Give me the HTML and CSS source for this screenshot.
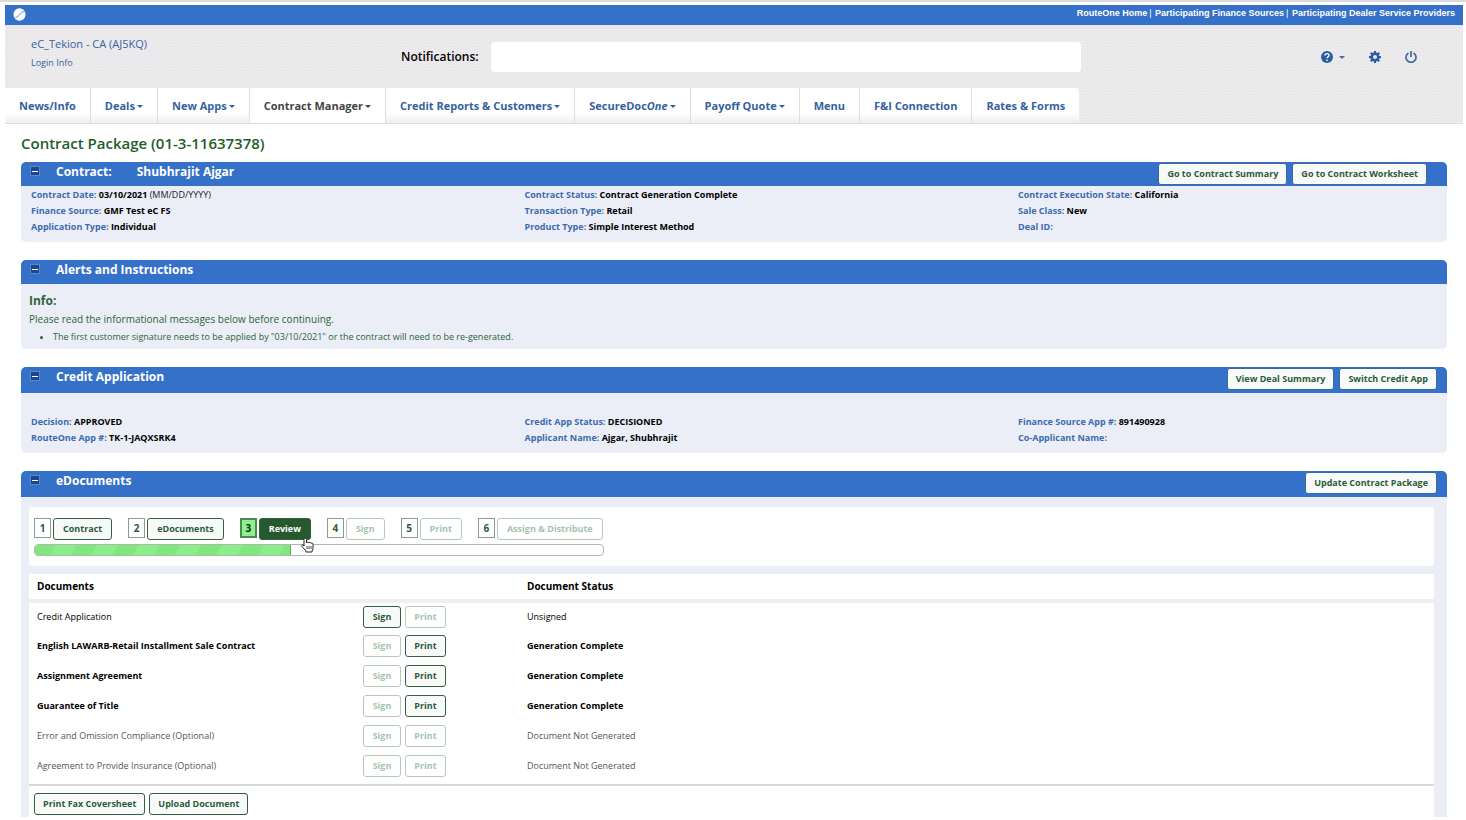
FILE: index.html
```html
<!DOCTYPE html>
<html lang="en">
<head>
    <meta charset="utf-8">
    <meta name="viewport" content="width=device-width, initial-scale=1">

    <title>Contract Package</title>

    <link rel="stylesheet" href="styles.css">
</head>
<body>
    <div class="page">
        <header>
            <div class="topbar">
                <svg class="logo" viewBox="0 0 26 26" aria-hidden="true">
                    <ellipse cx="13" cy="13" rx="12" ry="12.5" fill="#fff"/>
                    <path d="M3 19C9 18 12 15 14 12S19 7 23 7" fill="none" stroke="#7fa5de" stroke-width="2"/>
                    <path d="M8 23C9 17 14 13 22 9" fill="none" stroke="#a9c4ea" stroke-width="1"/>
                </svg>
                <nav class="toplinks">
                    <a href="#">RouteOne Home</a><span class="divider">|</span>
                    <a href="#">Participating Finance Sources</a><span class="divider">|</span>
                    <a href="#">Participating Dealer Service Providers</a>
                </nav>
            </div>

            <div class="masthead">
                <div class="account-row">
                    <div class="account">
                        <a class="account-name" href="#">eC_Tekion - CA (AJ5KQ)</a>
                        <a class="login-info" href="#">Login Info</a>
                    </div>
                    <div class="notifications">
                        <label for="notifications">Notifications:</label>
                        <input id="notifications" type="text">
                    </div>
                    <div class="tools">
                        <button class="tool help" type="button" aria-label="Help">
                            <svg width="12" height="12" viewBox="0 0 24 24"><circle cx="12" cy="12" r="12" fill="#2a5ba3"/><path d="M8 9c0-5 8-5 8 0 0 3-4 2.500-4 5.500M12 17v3" fill="none" stroke="#fff" stroke-width="2.800"/></svg>
                            <span class="caret"></span>
                        </button>
                        <button class="tool" type="button" aria-label="Settings">
                            <svg width="12" height="12" viewBox="0 0 24 24"><circle cx="12" cy="12" r="6.500" fill="none" stroke="#2a5ba3" stroke-width="5"/><path d="M12 0v5M12 19v5M0 12h5M19 12h5M3.500 3.500l3.500 3.500M17 17l3.500 3.500M3.500 20.500L7 17M17 7l3.500-3.500" stroke="#2a5ba3" stroke-width="4.500"/></svg>
                        </button>
                        <button class="tool" type="button" aria-label="Log out">
                            <svg width="12" height="12" viewBox="0 0 24 24"><path d="M7 4a10 10 0 1 0 10 0M12 0v12" fill="none" stroke="#466ba3" stroke-width="3.500"/></svg>
                        </button>
                    </div>
                </div>

                <nav class="tabs">
                    <a class="tab" href="#">News/Info</a>
                    <a class="tab" href="#">Deals<span class="caret"></span></a>
                    <a class="tab" href="#">New Apps<span class="caret"></span></a>
                    <a class="tab active" href="#">Contract Manager<span class="caret"></span></a>
                    <a class="tab" href="#">Credit Reports &amp; Customers<span class="caret"></span></a>
                    <a class="tab" href="#">SecureDoc<i>One</i><span class="caret"></span></a>
                    <a class="tab" href="#">Payoff Quote<span class="caret"></span></a>
                    <a class="tab" href="#">Menu</a>
                    <a class="tab" href="#">F&amp;I Connection</a>
                    <a class="tab" href="#">Rates &amp; Forms</a>
                </nav>
            </div>
        </header>

        <main>
            <h1>Contract Package (01-3-11637378)</h1>

            <section class="panel">
                <div class="panel-head short">
                    <button class="collapse" type="button" aria-label="Collapse"></button>
                    <h2>Contract:<span class="customer">Shubhrajit Ajgar</span></h2>
                    <div class="panel-actions wide">
                        <button class="btn" type="button">Go to Contract Summary</button>
                        <button class="btn" type="button">Go to Contract Worksheet</button>
                    </div>
                </div>
                <div class="facts">
                    <div>
                        <p>Contract Date: <b>03/10/2021</b> <span class="hint">(MM/DD/YYYY)</span></p>
                        <p>Finance Source: <b>GMF Test eC FS</b></p>
                        <p>Application Type: <b>Individual</b></p>
                    </div>
                    <div>
                        <p>Contract Status: <b>Contract Generation Complete</b></p>
                        <p>Transaction Type: <b>Retail</b></p>
                        <p>Product Type: <b>Simple Interest Method</b></p>
                    </div>
                    <div>
                        <p>Contract Execution State: <b>California</b></p>
                        <p>Sale Class: <b>New</b></p>
                        <p>Deal ID:</p>
                    </div>
                </div>
            </section>

            <section class="panel">
                <div class="panel-head short">
                    <button class="collapse" type="button" aria-label="Collapse"></button>
                    <h2>Alerts and Instructions</h2>
                </div>
                <div class="alerts">
                    <h3>Info:</h3>
                    <p>Please read the informational messages below before continuing.</p>
                    <ul>
                        <li>The first customer signature needs to be applied by "03/10/2021" or the contract will need to be re-generated.</li>
                    </ul>
                </div>
            </section>

            <section class="panel">
                <div class="panel-head">
                    <button class="collapse" type="button" aria-label="Collapse"></button>
                    <h2>Credit Application</h2>
                    <div class="panel-actions">
                        <button class="btn" type="button">View Deal Summary</button>
                        <button class="btn" type="button">Switch Credit App</button>
                    </div>
                </div>
                <div class="facts credit">
                    <div>
                        <p>Decision: <b>APPROVED</b></p>
                        <p>RouteOne App #: <b>TK-1-JAQXSRK4</b></p>
                    </div>
                    <div>
                        <p>Credit App Status: <b>DECISIONED</b></p>
                        <p>Applicant Name: <b>Ajgar, Shubhrajit</b></p>
                    </div>
                    <div>
                        <p>Finance Source App #: <b>891490928</b></p>
                        <p>Co-Applicant Name:</p>
                    </div>
                </div>
            </section>

            <section class="panel documents">
                <div class="panel-head">
                    <button class="collapse" type="button" aria-label="Collapse"></button>
                    <h2>eDocuments</h2>
                    <div class="panel-actions">
                        <button class="btn" type="button">Update Contract Package</button>
                    </div>
                </div>
                <div class="documents-body">
                    <div class="progress-box">
                        <ol class="steps">
                            <li><span class="num">1</span><button class="btn" type="button">Contract</button></li>
                            <li><span class="num">2</span><button class="btn" type="button">eDocuments</button></li>
                            <li class="current"><span class="num">3</span><button class="btn" type="button">Review</button>
                                <svg class="pointer" width="13" height="16" viewBox="0 0 13 16" aria-hidden="true"><path d="M3 9V2.500q0-1.500 1.200-1.500t1.300 1.500V6q.2-1 1.100-1t1.200 1q.2-.6 1-.6t1.200 1q.2-.4.9-.4 1.100 0 1.100 1.500V11q0 2-1 3v1H5v-1L1 9.500Q.5 8 1.500 7.800T3 9z" fill="#fff" stroke="#222" stroke-width="1"/><path d="M6 9v3M8 9v3M10 9v3" stroke="#222" stroke-width=".8"/></svg>
                            </li>
                            <li><span class="num">4</span><button class="btn" type="button" disabled>Sign</button></li>
                            <li><span class="num">5</span><button class="btn" type="button" disabled>Print</button></li>
                            <li><span class="num">6</span><button class="btn" type="button" disabled>Assign &amp; Distribute</button></li>
                        </ol>
                        <div class="progress"><div class="progress-fill" style="width: 45%"></div></div>
                    </div>

                    <div class="table-box">
                        <table>
                            <colgroup><col class="col-name"><col class="col-actions"><col></colgroup>
                            <thead>
                                <tr><th scope="col">Documents</th><th></th><th scope="col">Document Status</th></tr>
                            </thead>
                            <tbody>
                                <tr>
                                    <td>Credit Application</td>
                                    <td><div class="row-actions"><button class="btn" type="button">Sign</button><button class="btn" type="button" disabled>Print</button></div></td>
                                    <td>Unsigned</td>
                                </tr>
                                <tr class="generated">
                                    <td>English LAWARB-Retail Installment Sale Contract</td>
                                    <td><div class="row-actions"><button class="btn" type="button" disabled>Sign</button><button class="btn" type="button">Print</button></div></td>
                                    <td>Generation Complete</td>
                                </tr>
                                <tr class="generated">
                                    <td>Assignment Agreement</td>
                                    <td><div class="row-actions"><button class="btn" type="button" disabled>Sign</button><button class="btn" type="button">Print</button></div></td>
                                    <td>Generation Complete</td>
                                </tr>
                                <tr class="generated">
                                    <td>Guarantee of Title</td>
                                    <td><div class="row-actions"><button class="btn" type="button" disabled>Sign</button><button class="btn" type="button">Print</button></div></td>
                                    <td>Generation Complete</td>
                                </tr>
                                <tr class="optional">
                                    <td>Error and Omission Compliance (Optional)</td>
                                    <td><div class="row-actions"><button class="btn" type="button" disabled>Sign</button><button class="btn" type="button" disabled>Print</button></div></td>
                                    <td>Document Not Generated</td>
                                </tr>
                                <tr class="optional">
                                    <td>Agreement to Provide Insurance (Optional)</td>
                                    <td><div class="row-actions"><button class="btn" type="button" disabled>Sign</button><button class="btn" type="button" disabled>Print</button></div></td>
                                    <td>Document Not Generated</td>
                                </tr>
                            </tbody>
                        </table>
                        <div class="table-footer">
                            <button class="btn" type="button">Print Fax Coversheet</button>
                            <button class="btn" type="button">Upload Document</button>
                        </div>
                    </div>
                </div>
            </section>
        </main>
    </div>
</body>
</html>
```

FILE: styles.css
```css
* {
    box-sizing: border-box;
}

body {
    margin: 0;
    background: #ffffff;
    border-top: 2px solid #dcdcdc;
    font-family: "Open Sans", sans-serif;
    font-size: 9px;
    line-height: 16px;
    color: #000000;
}

h1, h2, h3, p, ul, ol {
    margin: 0;
    padding: 0;
}

a {
    color: #35619f;
    text-decoration: none;
}

button {
    font-family: inherit;
    cursor: pointer;
}

.page {
    padding: 3px 3px 0 5px;
}

/* header */

.topbar {
    display: flex;
    justify-content: space-between;
    height: 20px;
    padding: 0 8px;
    background: #3671c9;
}

.logo {
    width: 13px;
    height: 13px;
    margin-top: 3px;
}

.toplinks {
    font-family: "Liberation Sans", Arial, sans-serif;
    font-weight: bold;
    color: #ffffff;
}

.toplinks a {
    color: #ffffff;
}

.divider {
    margin: 0 1px 0 2px;
    font-weight: normal;
}

.masthead {
    background-color: #e9e7e9;
    background-image:
        repeating-linear-gradient(90deg, rgba(255, 255, 255, 0.15) 0 1px, transparent 1px 3px),
        repeating-linear-gradient(rgba(255, 255, 255, 0.15) 0 1px, transparent 1px 3px);
    border-top: 1px solid #dbe6f2;
    border-bottom: 1px solid #dddddd;
}

.account-row {
    display: flex;
    height: 62px;
    padding: 0 46px 0 26px;
}

.account {
    flex: 0 0 370px;
    padding-top: 10px;
}

.account a {
    display: block;
}

.account-name {
    font-size: 11px;
    line-height: 16px;
}

.login-info {
    line-height: 22px;
}

.notifications {
    display: flex;
    flex: 0 1 680px;
    align-items: center;
    gap: 12px;
}

.notifications label {
    font-size: 12px;
    font-weight: 600;
}

.notifications input {
    flex: 1;
    min-width: 0;
    height: 30px;
    border: 0;
    border-radius: 4px;
    background: #ffffff;
}

.tools {
    display: flex;
    align-items: center;
    gap: 24px;
    margin-left: auto;
}

.tool {
    display: flex;
    align-items: center;
    gap: 4px;
    padding: 0;
    border: 0;
    background: none;
    color: #466ba3;
}

.caret {
    display: inline-block;
    margin-left: 2px;
    border-top: 3px solid currentColor;
    border-left: 3px solid transparent;
    border-right: 3px solid transparent;
    vertical-align: 2px;
}

.tabs {
    display: flex;
}

.tab {
    height: 35px;
    padding: 0 14px;
    background: linear-gradient(#ffffff 70%, #efefef);
    border-right: 1px solid #dedde1;
    font-size: 11px;
    font-weight: bold;
    line-height: 36px;
    white-space: nowrap;
}

.tab:last-child {
    border-right: 0;
    border-top-right-radius: 3px;
}

.tab.active {
    background: #ffffff;
    color: #444444;
}

/* panels */

main {
    padding: 7px 16px 0;
}

h1 {
    font-size: 15px;
    font-weight: 600;
    line-height: 24px;
    color: #235c2b;
}

.panel {
    margin: 7px 0 18px;
    border-radius: 5px;
    background: #ebeef7;
}

.panel + .panel {
    margin-top: 0;
}

.panel-head {
    display: flex;
    align-items: flex-start;
    height: 26px;
    padding: 0 10px 0 9px;
    border-radius: 5px 5px 0 0;
    background: #3671c9;
}

.panel-head.short {
    height: 24px;
}

.collapse {
    width: 10px;
    height: 10px;
    margin: 4px 16px 0 0;
    padding: 0 1px;
    border: 1px solid #5b86c8;
    background: #1c4890;
}

.collapse::before {
    content: "";
    display: block;
    height: 1px;
    background: #ffffff;
}

.panel-head h2 {
    font-size: 12px;
    font-weight: bold;
    line-height: 20px;
    color: #ffffff;
}

.customer {
    margin-left: 25px;
}

.panel-actions {
    display: flex;
    gap: 5px;
    margin: 1px 0 0 auto;
}

.panel-actions.wide {
    margin-right: 10px;
}

.btn {
    height: 22px;
    padding: 0 8px;
    border: 1px solid #355e43;
    border-radius: 3px;
    background: #f8fafa;
    font-size: 9px;
    font-weight: bold;
    line-height: 20px;
    color: #2c5b38;
    white-space: nowrap;
}

.btn:disabled {
    border-color: #b9c8bf;
    background: #ffffff;
    color: #a5c4ae;
}

.panel-actions .btn {
    border-color: #3d6a9d;
}

.facts {
    display: grid;
    grid-template-columns: 35% 35% 30%;
    padding: 1px 6px 7px 10px;
    font-weight: bold;
    color: #3d6bb0;
}

.facts.credit {
    padding-top: 21px;
}

.facts b {
    font-weight: 700;
    color: #000000;
}

.hint {
    font-weight: normal;
    color: #222222;
}

.alerts {
    padding: 8px 8px 4px;
    color: #2f6339;
}

.alerts h3 {
    font-size: 12px;
    font-weight: bold;
    line-height: 18px;
}

.alerts p {
    font-size: 10px;
    line-height: 18px;
}

.alerts ul {
    padding-left: 24px;
    line-height: 17px;
}

/* documents */

.documents {
    margin-bottom: 0;
    border-radius: 5px 5px 0 0;
}

.documents-body {
    padding: 10px 13px 0 8px;
}

.progress-box {
    height: 59px;
    padding: 11px 5px 0;
    border-radius: 3px;
    background: #ffffff;
}

.steps {
    display: flex;
    gap: 16px;
    list-style: none;
}

.steps li {
    display: flex;
    gap: 2px;
    position: relative;
}

.steps .btn {
    padding: 0 9px;
}

.num {
    width: 17px;
    height: 20px;
    border: 1px solid #8d9a90;
    font-weight: bold;
    font-size: 10px;
    line-height: 18px;
    text-align: center;
    color: #2c5b38;
}

.current .num {
    border: 2px solid #4f8a55;
    background: #90f08c;
    line-height: 16px;
    color: #0c3313;
}

.current .btn {
    background: #27592f;
    color: #ffffff;
}

.pointer {
    position: absolute;
    right: -3px;
    top: 19px;
}

.progress {
    width: 570px;
    height: 12px;
    margin-top: 4px;
    border: 1px solid #b5b5b5;
    border-radius: 4px;
    overflow: hidden;
}

.progress-fill {
    height: 100%;
    border-right: 1px solid #6ba56b;
    background: repeating-linear-gradient(120deg, #7fe87c 0 18px, #8cee88 18px 36px);
}

.table-box {
    margin-top: 8px;
    background: #ffffff;
}

table {
    width: 100%;
    border-collapse: collapse;
    table-layout: fixed;
}

.col-name {
    width: 334px;
}

.col-actions {
    width: 164px;
}

th {
    height: 27px;
    padding: 0 0 2px 8px;
    border-bottom: 4px solid #efefef;
    font-size: 10px;
    text-align: left;
}

td {
    height: 30px;
    padding: 0 0 0 8px;
}

td:nth-child(2) {
    padding: 0;
}

th:nth-child(3),
td:nth-child(3) {
    padding-left: 0;
}

.row-actions {
    display: flex;
    gap: 4px;
}

.row-actions .btn:first-child {
    width: 38px;
}

.row-actions .btn:last-child {
    width: 41px;
}

.generated {
    font-weight: bold;
}

.optional {
    color: #555555;
}

.table-footer {
    display: flex;
    gap: 4px;
    margin-top: 3px;
    padding: 7px 5px 2px;
    border-top: 2px solid #d9d9d9;
}
```
